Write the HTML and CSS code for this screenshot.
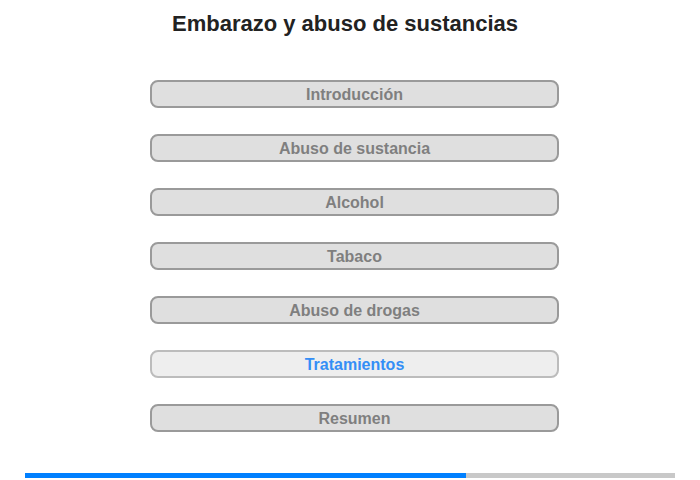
FILE: index.html
```html
<!DOCTYPE html>
<html lang="es">
<head>
<meta charset="utf-8">
<title>Embarazo y abuso de sustancias</title>
<link rel="stylesheet" href="styles.css">
</head>
<body>
<div class="page">
  <h1 class="title">Embarazo y abuso de sustancias</h1>
  <nav class="menu">
    <div class="item">Introducción</div>
    <div class="item">Abuso de sustancia</div>
    <div class="item">Alcohol</div>
    <div class="item">Tabaco</div>
    <div class="item">Abuso de drogas</div>
    <div class="item active">Tratamientos</div>
    <div class="item">Resumen</div>
  </nav>
  <div class="progress"><div class="progress-fill" style="width:441px"></div></div>
</div>
</body>
</html>
```
FILE: styles.css
```css
html, body {
  margin: 0;
  padding: 0;
  background: #fff;
}
.page {
  width: 700px;
  height: 480px;
  display: flex;
  flex-direction: column;
  font-family: "Liberation Sans", Arial, sans-serif;
}
.title {
  margin: 10px 0 0 0;
  height: 28px;
  line-height: 28px;
  font-size: 22px;
  font-weight: bold;
  color: #222;
  text-align: center;
  padding-right: 10px;
}
.menu {
  margin: 42px 0 0 150px;
  width: 409px;
  display: flex;
  flex-direction: column;
  gap: 26px;
}
.item {
  box-sizing: border-box;
  height: 28px;
  border: 2px solid #9a9a9a;
  border-radius: 8px;
  background: #dfdfdf;
  color: #7f7f7f;
  font-size: 16px;
  font-weight: bold;
  line-height: 25px;
  text-align: center;
}
.item.active {
  background: #eeeeee;
  border-color: #bcbcbc;
  color: #348ef6;
}
.progress {
  margin: 41px 0 0 25px;
  width: 650px;
  height: 5px;
  background: #c8c8c8;
  display: flex;
}
.progress-fill {
  height: 100%;
  background: #0080ff;
}
```
